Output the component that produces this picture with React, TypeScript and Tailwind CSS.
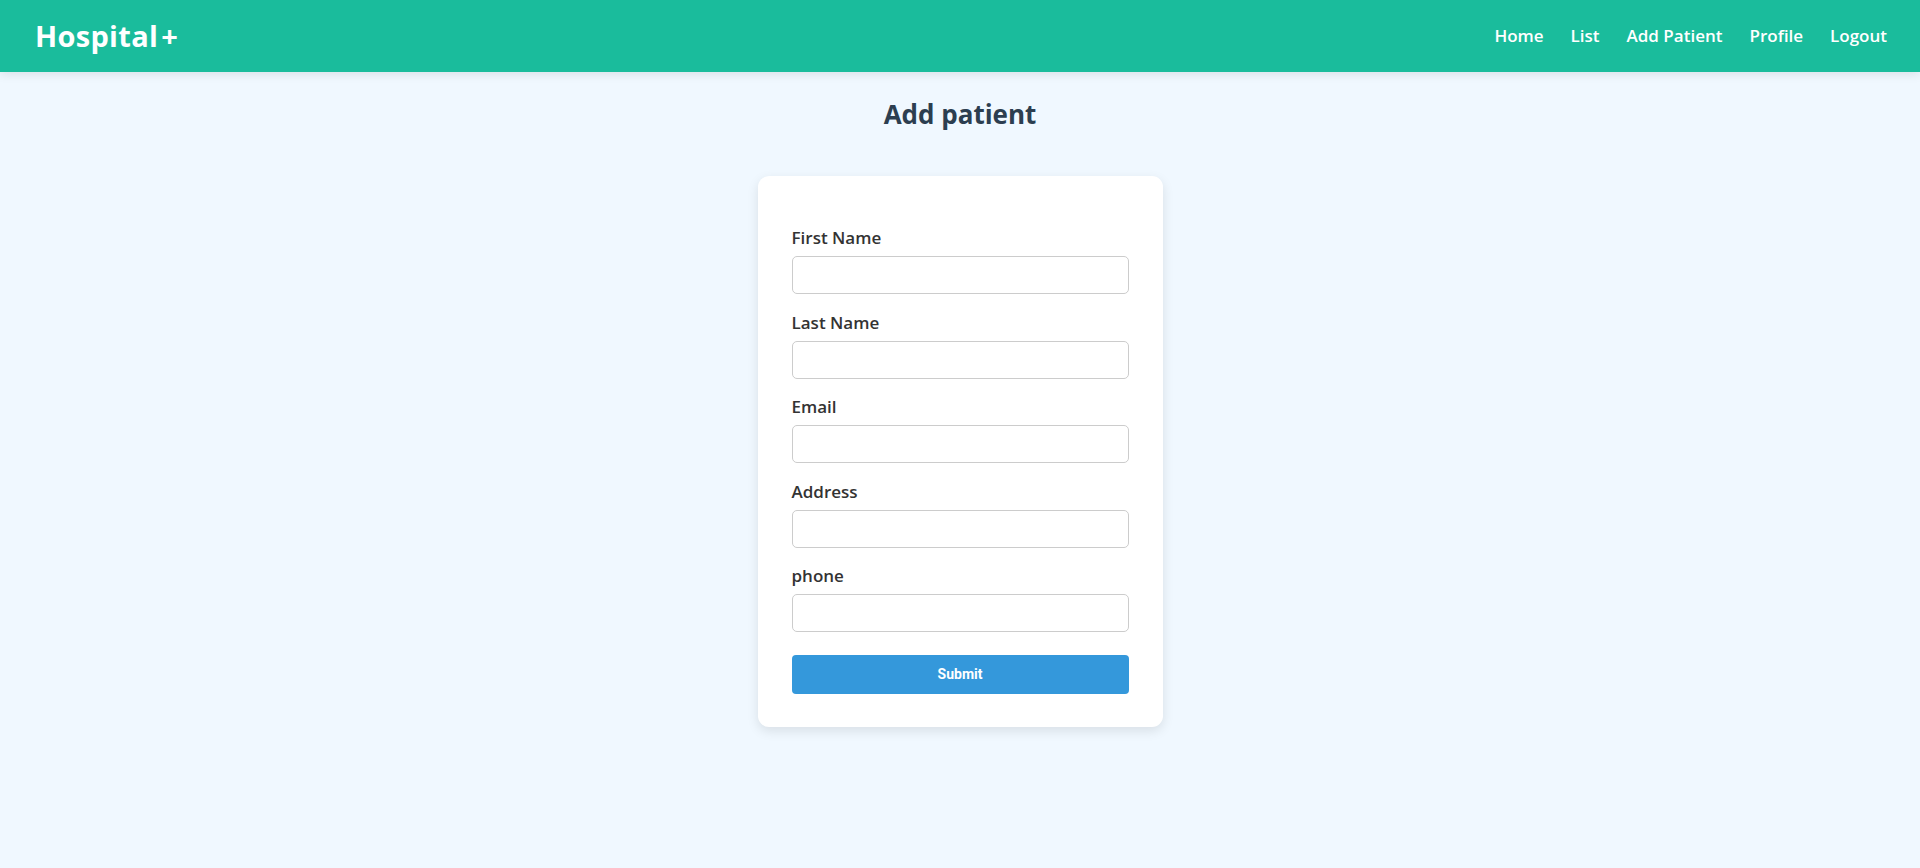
import React from 'react';

const fields = ['First Name', 'Last Name', 'Email', 'Address', 'phone'];

export default function App() {
  return (
    <div className="min-h-screen bg-[#f0f8ff]" style={{ fontFamily: '"Open Sans", "Noto Sans", sans-serif' }}>
      <nav className="flex h-[72px] items-center justify-between bg-[#1abc9c] pl-[35px] pr-[33px] shadow-[0_2px_10px_rgba(0,0,0,0.1)]">
        <div className="text-[29px] font-bold tracking-[0.3px] text-white">
          Hospital<span className="ml-[3px]">+</span>
        </div>
        <ul className="flex gap-[27px] text-[17px] font-semibold text-white">
          <li>Home</li>
          <li>List</li>
          <li>Add Patient</li>
          <li>Profile</li>
          <li>Logout</li>
        </ul>
      </nav>

      <h1 className="mt-[25px] text-center text-[26px] leading-[34px] font-bold text-[#2c3e50]">Add patient</h1>

      <div className="mx-auto mt-[45px] w-[405px] rounded-[11px] bg-white px-[34px] pt-[50px] pb-[33px] shadow-[0_4px_12px_rgba(0,0,0,0.1)]">
        <form onSubmit={(e) => e.preventDefault()}>
          {fields.map((f, i) => (
            <div key={f} className={i < fields.length - 1 ? 'mb-[16.5px]' : ''}>
              <label className="mb-[6px] block text-[17px] leading-[24px] font-semibold text-[#333]">{f}</label>
              <input
                type="text"
                className="block h-[38px] w-full rounded-[5px] border border-[#ccc] bg-white px-3 text-[16px] outline-none"
              />
            </div>
          ))}
          <button
            type="submit"
            className="mt-[23px] block h-[39px] w-full rounded-[4px] bg-[#3498db] text-[14px] font-bold text-white"
            style={{ fontFamily: 'Roboto, Arial, sans-serif' }}
          >
            Submit
          </button>
        </form>
      </div>
    </div>
  );
}
